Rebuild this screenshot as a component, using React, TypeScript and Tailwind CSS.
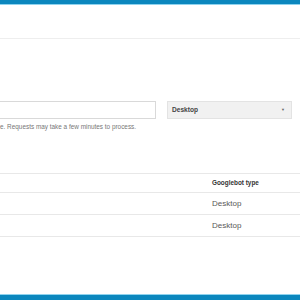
const FONT = { fontFamily: 'Arial, "Liberation Sans", sans-serif' }

export default function App() {
  return (
    <div className="flex h-[300px] w-[300px] flex-col overflow-hidden bg-white" style={FONT}>
      {/* top bar */}
      <div className="h-[4px] shrink-0 bg-[#0b87be]" />
      <div className="h-px shrink-0 bg-[#8fd3ee]" />

      {/* page header */}
      <div className="h-[34px] shrink-0 border-b border-[#eeeeee]" />

      <div className="flex-1">
        {/* fetch form */}
        <div className="mt-[62px] flex items-center">
          <div className="-ml-px h-[18px] w-[157px] border border-[#d9d9d9] bg-white" />
          <div className="ml-[11px] flex h-[18px] w-[125px] items-center justify-between border border-[#e3e3e3] bg-[#f1f1f1] pl-[4px] pr-[6px]">
            <span className="text-[6.6px] font-bold text-[#444]">Desktop</span>
            <span className="text-[4px] leading-none text-[#666]">▼</span>
          </div>
        </div>
        <p className="mt-[4px] text-[6.4px] leading-[8px] text-[#777]">
          e. Requests may take a few minutes to process.
        </p>

        {/* results table */}
        <div className="mt-[42px] border-t border-[#e8e8e8]">
          <div className="flex h-[19px] items-center border-b border-[#e8e8e8]">
            <span className="ml-[212px] text-[6.4px] font-bold text-[#333]">Googlebot type</span>
          </div>
          {['Desktop', 'Desktop'].map((t, i) => (
            <div key={i} className="flex h-[22px] items-center border-b border-[#e8e8e8]">
              <span className="ml-[212px] text-[8px] text-[#595959]">{t}</span>
            </div>
          ))}
        </div>
      </div>

      {/* bottom bar */}
      <div className="h-px shrink-0 bg-[#8fd3ee]" />
      <div className="h-[5px] shrink-0 bg-[#0b87be]" />
    </div>
  )
}
